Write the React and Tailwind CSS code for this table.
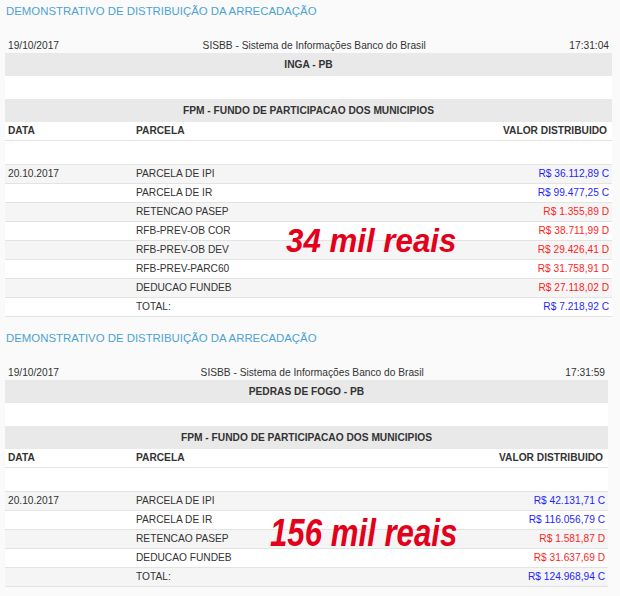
const sections = [
  {
    city: "INGA - PB",
    time: "17:31:04",
    width: "w-[607px]",
    overlay: "34 mil reais",
    overlayClass: "left-[286px] top-[223px] text-[34px] scale-x-[0.92]",
    rows: [
      ["PARCELA DE IPI", "R$ 36.112,89 C"],
      ["PARCELA DE IR", "R$ 99.477,25 C"],
      ["RETENCAO PASEP", "R$ 1.355,89 D"],
      ["RFB-PREV-OB COR", "R$ 38.711,99 D"],
      ["RFB-PREV-OB DEV", "R$ 29.426,41 D"],
      ["RFB-PREV-PARC60", "R$ 31.758,91 D"],
      ["DEDUCAO FUNDEB", "R$ 27.118,02 D"],
      ["TOTAL:", "R$ 7.218,92 C"],
    ],
  },
  {
    city: "PEDRAS DE FOGO - PB",
    time: "17:31:59",
    width: "w-[603px]",
    overlay: "156 mil reais",
    overlayClass: "left-[270px] top-[186px] text-[39px] scale-x-[0.8]",
    rows: [
      ["PARCELA DE IPI", "R$ 42.131,71 C"],
      ["PARCELA DE IR", "R$ 116.056,79 C"],
      ["RETENCAO PASEP", "R$ 1.581,87 D"],
      ["DEDUCAO FUNDEB", "R$ 31.637,69 D"],
      ["TOTAL:", "R$ 124.968,94 C"],
    ],
  },
];

function Demonstrativo({ section, first }) {
  return (
    <div className={`relative ${first ? "" : "mt-[10px]"}`}>
      <div className="h-[22px] pl-[6px] text-[11.4px] leading-[22px] text-[#4ba3d3]">
        DEMONSTRATIVO DE DISTRIBUIÇÃO DA ARRECADAÇÃO
      </div>

      <div className={`ml-[5px] ${section.width}`}>
        {/* cabecalho do sisbb */}
        <div className="mt-[17px] flex h-[14px] items-center justify-between px-[3px] leading-[14px]">
          <span>19/10/2017</span>
          <span>SISBB - Sistema de Informações Banco do Brasil</span>
          <span>{section.time}</span>
        </div>
        <div className="flex h-[23px] items-center justify-center bg-[#e9e9e9] font-bold">
          {section.city}
        </div>
        <div className="h-[23px] bg-white" />
        <div className="flex h-[23px] items-center justify-center bg-[#e9e9e9] font-bold">
          FPM - FUNDO DE PARTICIPACAO DOS MUNICIPIOS
        </div>

        {/* tabela */}
        <div className="flex h-[18px] items-center bg-white font-bold">
          <div className="w-[131px] pl-[3px]">DATA</div>
          <div className="flex-1">PARCELA</div>
          <div className="pr-[5px] text-right">VALOR DISTRIBUIDO</div>
        </div>
        <div className="h-[24px] border-t border-[#e3e3e3] bg-white" />
        <div className="border-b border-[#e3e3e3]">
          {section.rows.map(([parcela, valor], i) => (
            <div
              key={parcela}
              className={`flex h-[19px] items-center border-t border-[#e3e3e3] ${
                i % 2 === 0 ? "bg-[#f5f5f5]" : "bg-white"
              }`}
            >
              <div className="w-[131px] pl-[3px]">{i === 0 ? "20.10.2017" : ""}</div>
              <div className="flex-1">{parcela}</div>
              <div
                className={`pr-[3px] text-right ${
                  valor.endsWith("C") ? "text-[#1f1fff]" : "text-[#ff1f1f]"
                }`}
              >
                {valor}
              </div>
            </div>
          ))}
        </div>
      </div>

      <span
        className={`absolute origin-left whitespace-nowrap font-bold italic leading-none text-[#e2001a] ${section.overlayClass}`}
      >
        {section.overlay}
      </span>
    </div>
  );
}

export default function App() {
  return (
    <div className="h-[596px] w-[620px] overflow-hidden bg-[#fafafa] font-['Liberation_Sans',Arial,sans-serif] text-[10.2px] text-[#333]">
      {sections.map((s, i) => (
        <Demonstrativo key={s.city} section={s} first={i === 0} />
      ))}
    </div>
  );
}
